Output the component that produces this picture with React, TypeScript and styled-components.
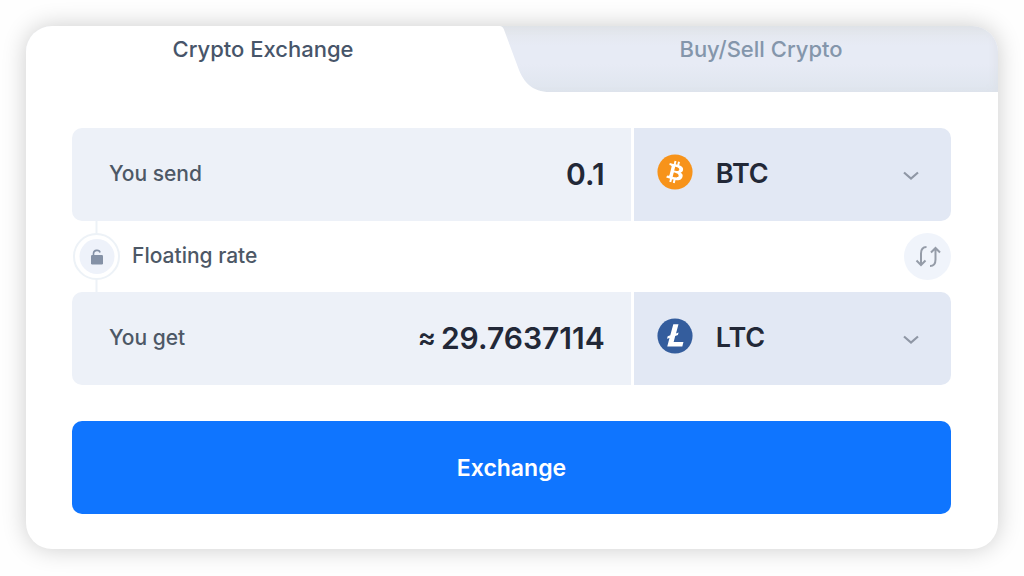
import React, { useState } from "react";
import styled, { createGlobalStyle } from "styled-components";

const GlobalStyle = createGlobalStyle`
  *, *::before, *::after { box-sizing: border-box; }
  body {
    margin: 0;
    background: #fefefe;
    font-family: Inter, "Liberation Sans", sans-serif;
    color: #222837;
  }
  button, input, select { font: inherit; color: inherit; }
`;

const Page = styled.main`
  padding: 26px;
`;

const Card = styled.section`
  background: #ffffff;
  border-radius: 26px;
  box-shadow: 0 0 24px rgba(0, 0, 0, 0.2);
  overflow: hidden;
`;

const Tabs = styled.div`
  display: flex;
  height: 66px;
  background: linear-gradient(180deg, #e3e6eb 0, #e7ebf5 20px, #e7ebf5 38px, #dfe5ee 100%);
  box-shadow: inset -2px 2px 8px rgba(218, 222, 226, 0.6);
`;

const Tab = styled.button<{ $active?: boolean }>`
  flex: 1;
  padding: 0 0 20px;
  border: 0;
  background: ${({ $active }) => ($active ? "#ffffff" : "transparent")};
  color: ${({ $active }) => ($active ? "#475569" : "#8496ab")};
  font-size: 22px;
  line-height: 28px;
  font-weight: 500;
  cursor: pointer;
`;

const TabEdge = styled.svg`
  flex: none;
  width: 50px;
  height: 66px;
  margin-right: -26px;
`;

const Form = styled.form`
  padding: 36px 47px 35px 46px;
`;

const Row = styled.div`
  display: grid;
  grid-template-columns: 558fr 317fr;
  gap: 3px;
  height: 93px;
  border-radius: 10px;
  overflow: hidden;
`;

const AmountCell = styled.div`
  display: flex;
  align-items: center;
  min-width: 0;
  padding: 0 26px 2px 37px;
  background: #edf1f8;
`;

const Label = styled.label`
  flex: none;
  font-size: 21px;
  line-height: 28px;
  font-weight: 500;
  color: #4d5866;
`;

const Amount = styled.input`
  flex: 1;
  min-width: 0;
  padding: 0;
  border: 0;
  outline: 0;
  background: transparent;
  text-align: right;
  font-size: 30px;
  line-height: 36px;
  font-weight: 600;
`;

const Estimate = styled.output`
  flex: 1;
  display: flex;
  justify-content: flex-end;
  gap: 5px;
  font-size: 30px;
  line-height: 36px;
  font-weight: 600;
`;

const Approx = styled.span`
  font-size: 27px;
`;

const CurrencyCell = styled.div`
  position: relative;
  display: flex;
  align-items: center;
  padding-left: 23px;
  background: #e2e8f4;
`;

const Coin = styled.svg`
  flex: none;
  width: 36px;
  height: 36px;
  margin-bottom: 6px;
`;

const Select = styled.select`
  flex: 1;
  align-self: stretch;
  min-width: 0;
  padding: 0 60px 2px 23px;
  border: 0;
  outline: 0;
  appearance: none;
  background: transparent;
  font-size: 27px;
  line-height: 32px;
  font-weight: 600;
  cursor: pointer;
`;

const Chevron = styled.svg`
  position: absolute;
  right: 31px;
  top: 42px;
  width: 18px;
  height: 12px;
  pointer-events: none;
`;

const RateRow = styled.div`
  display: flex;
  align-items: center;
  height: 71px;
`;

const RateButton = styled.button`
  display: flex;
  align-items: center;
  gap: 11px;
  padding: 0;
  border: 0;
  background: transparent;
  font-size: 21px;
  line-height: 28px;
  font-weight: 500;
  color: #4d5866;
  cursor: pointer;
`;

const RateText = styled.span`
  padding-bottom: 2px;
`;

const LockIcon = styled.svg`
  width: 49px;
  height: 71px;
`;

const SwapButton = styled.button`
  display: flex;
  align-items: center;
  justify-content: center;
  width: 47px;
  height: 47px;
  margin-left: auto;
  padding: 0;
  border: 0;
  border-radius: 50%;
  background: #f0f4fb;
  cursor: pointer;
`;

const Submit = styled.button`
  display: block;
  width: 100%;
  height: 93px;
  margin-top: 36px;
  border: 0;
  border-radius: 10px;
  background: #0f75ff;
  color: #ffffff;
  font-size: 23px;
  line-height: 28px;
  font-weight: 600;
  cursor: pointer;
`;

const BitcoinLogo = () => (
  <Coin viewBox="0 0 32 32" aria-hidden="true">
    <circle cx="16" cy="16" r="15.6" fill="#f7931a" />
    <path
      fill="#fff"
      d="M23.189 14.02c.314-2.096-1.283-3.223-3.465-3.975l.708-2.84-1.728-.43-.69 2.765c-.454-.114-.92-.22-1.385-.326l.695-2.783L15.596 6l-.708 2.839c-.376-.086-.746-.17-1.104-.26l.002-.009-2.384-.595-.46 1.846s1.283.294 1.256.312c.7.175.826.638.805 1.006l-.806 3.235c.048.012.11.03.18.057l-.183-.045-1.13 4.532c-.086.212-.303.531-.793.41.018.025-1.256-.313-1.256-.313l-.858 1.978 2.25.561c.418.105.828.215 1.231.318l-.715 2.872 1.727.43.708-2.84c.472.127.93.245 1.378.357l-.706 2.828 1.728.43.715-2.866c2.948.558 5.164.333 6.097-2.333.752-2.146-.037-3.385-1.588-4.192 1.13-.26 1.98-1.003 2.207-2.538zm-3.95 5.538c-.533 2.147-4.148.986-5.32.695l.95-3.805c1.172.293 4.929.872 4.37 3.11zm.535-5.569c-.487 1.953-3.495.96-4.47.717l.86-3.45c.975.243 4.118.696 3.61 2.733z"
    />
  </Coin>
);

const LitecoinLogo = () => (
  <Coin viewBox="0 0 32 32" aria-hidden="true">
    <circle cx="16" cy="16" r="15.6" fill="#345d9d" />
    <path
      fill="#fff"
      d="M14.5 5.5h4.6l-2.2 8.2 2.3-.8-.6 2.3-2.4.9-1.4 5.2h8.7l-1 4H9.1l2-7.6-2.2.8.6-2.3 2.3-.9z"
    />
  </Coin>
);

interface CurrencyProps {
  name: string;
  value: string;
  onChange: (value: string) => void;
}

const CurrencySelect = ({ name, value, onChange }: CurrencyProps) => (
  <CurrencyCell>
    {value === "BTC" ? <BitcoinLogo /> : <LitecoinLogo />}
    <Select aria-label={name} value={value} onChange={(e) => onChange(e.target.value)}>
      <option value="BTC">BTC</option>
      <option value="LTC">LTC</option>
    </Select>
    <Chevron viewBox="0 0 18 12" fill="none" aria-hidden="true">
      <path d="M2 2.500L9 8.500L16 2.500" stroke="#8f97a5" strokeWidth="2.2" />
    </Chevron>
  </CurrencyCell>
);

export default function App() {
  const [amount, setAmount] = useState("0.1");
  const [from, setFrom] = useState("BTC");
  const [to, setTo] = useState("LTC");

  const swap = () => {
    setFrom(to);
    setTo(from);
  };

  return (
    <>
      <GlobalStyle />
      <Page>
        <Card>
          <Tabs role="tablist">
            <Tab $active type="button" role="tab" aria-selected="true">Crypto Exchange</Tab>
            <TabEdge viewBox="0 0 50 66" aria-hidden="true">
              <path d="M-1 0C2 0 3.500 2 4.500 5L19 44C24 56 32 66 50 66H-1Z" fill="#fff" />
            </TabEdge>
            <Tab type="button" role="tab" aria-selected="false">Buy/Sell Crypto</Tab>
          </Tabs>
          <Form onSubmit={(e) => e.preventDefault()}>
            <Row>
              <AmountCell>
                <Label htmlFor="send">You send</Label>
                <Amount id="send" inputMode="decimal" value={amount} onChange={(e) => setAmount(e.target.value)} />
              </AmountCell>
              <CurrencySelect name="Currency to send" value={from} onChange={setFrom} />
            </Row>
            <RateRow>
              <RateButton type="button">
                <LockIcon viewBox="0 0 49 71" fill="none" aria-hidden="true">
                  <path d="M24.500 0V12M24.500 59V71" stroke="#edf2f7" strokeWidth="2" />
                  <circle cx="24.500" cy="35.500" r="22.500" stroke="#edf2f7" strokeWidth="2" />
                  <circle cx="25" cy="35.500" r="17.500" fill="#eef2fa" />
                  <rect x="19" y="34" width="12" height="9.500" rx="1.200" fill="#8491a6" />
                  <path d="M21.500 34.500V32.500C21.500 28.500 27.500 28.500 28 31.500" stroke="#8491a6" strokeWidth="1.600" />
                </LockIcon>
                <RateText>Floating rate</RateText>
              </RateButton>
              <SwapButton type="button" aria-label="Swap currencies" onClick={swap}>
                <svg width="30" height="26" viewBox="0 0 30 26" fill="none" stroke="#959ca8" strokeWidth="2" aria-hidden="true">
                  <path d="M13.500 3C9.500 3 8 5.500 8 9.500V20.500M3.500 16.500L8 21L12.500 16.500" />
                  <path d="M17 22C21 22 22.500 19.500 22.500 15.500V4.500M18 8.500L22.500 4L27 8.500" />
                </svg>
              </SwapButton>
            </RateRow>
            <Row>
              <AmountCell>
                <Label htmlFor="get">You get</Label>
                <Estimate id="get">
                  <Approx>≈</Approx>
                  <span>29.7637114</span>
                </Estimate>
              </AmountCell>
              <CurrencySelect name="Currency to get" value={to} onChange={setTo} />
            </Row>
            <Submit type="submit">Exchange</Submit>
          </Form>
        </Card>
      </Page>
    </>
  );
}
